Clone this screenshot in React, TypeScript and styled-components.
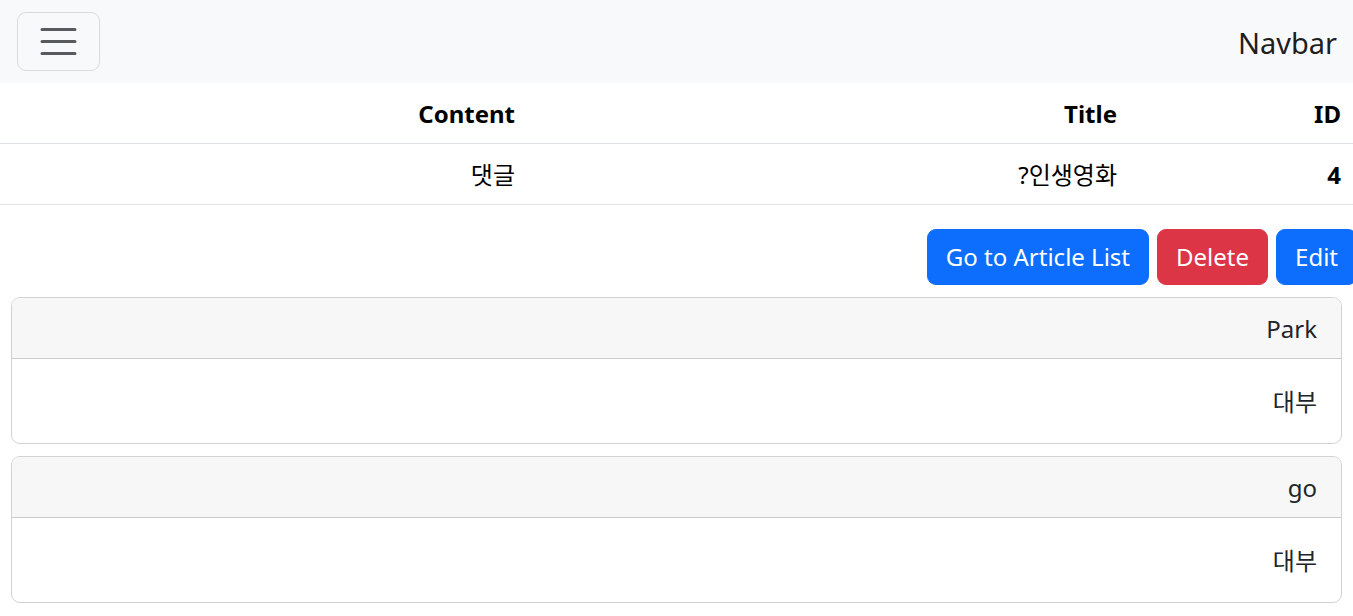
import React from "react";
import styled, { createGlobalStyle } from "styled-components";

const GlobalStyle = createGlobalStyle`
  html, body {
    margin: 0;
    padding: 0;
    background: #fff;
    overflow-x: hidden;
  }
  body {
    font-family: "Noto Sans", "Noto Sans CJK KR", sans-serif;
    font-size: 24px;
    line-height: 1.5;
    color: #212529;
  }
  * { box-sizing: border-box; }
`;

const Page = styled.div`
  direction: rtl;
`;

const NavBar = styled.nav`
  display: flex;
  align-items: center;
  justify-content: space-between;
  height: 83px;
  padding: 0 16px 0 17px;
  background: #f8f9fa;
`;

const Brand = styled.span`
  font-size: 29px;
  line-height: 45px;
  padding-top: 2px;
  color: rgba(0, 0, 0, 0.9);
`;

const Toggler = styled.button`
  display: flex;
  align-items: center;
  justify-content: center;
  width: 83px;
  height: 59px;
  padding: 0;
  background: transparent;
  border: 1px solid rgba(0, 0, 0, 0.12);
  border-radius: 9px;
`;

const Table = styled.table`
  width: 100%;
  border-collapse: collapse;
  color: #000;
`;

const HeadCell = styled.th`
  text-align: right;
  font-weight: 700;
  padding: 13px 12px 11px;
  line-height: 36px;
  border-bottom: 1px solid #dee2e6;
`;

const Cell = styled.td<{ $bold?: boolean }>`
  text-align: right;
  font-weight: ${(p) => (p.$bold ? 700 : 400)};
  padding: 13px 12px 11px;
  line-height: 36px;
  border-bottom: 1px solid #dee2e6;
`;

const ButtonRow = styled.div`
  display: flex;
  gap: 8px;
  margin: 24px -4px 12px 0;
`;

const Button = styled.button<{ $variant: "primary" | "danger" }>`
  font-family: inherit;
  font-size: 24px;
  line-height: 36px;
  padding: 9px 18px;
  color: #fff;
  border: 1px solid ${(p) => (p.$variant === "danger" ? "#dc3545" : "#0d6efd")};
  background: ${(p) => (p.$variant === "danger" ? "#dc3545" : "#0d6efd")};
  border-radius: 9px;
  white-space: nowrap;
`;

const CardList = styled.div`
  display: flex;
  flex-direction: column;
  gap: 12px;
  margin: 0 11px;
`;

const Card = styled.div`
  border: 1px solid rgba(0, 0, 0, 0.175);
  border-radius: 9px;
  overflow: hidden;
`;

const CardHeader = styled.div`
  padding: 13px 24px 11px;
  line-height: 36px;
  background: #f7f7f7;
  border-bottom: 1px solid rgba(0, 0, 0, 0.175);
`;

const CardBody = styled.div`
  padding: 25px 24px 23px;
  line-height: 36px;
`;

const MenuIcon = () => (
  <svg width="45" height="45" viewBox="0 0 30 30">
    <path
      d="M4 7h22M4 15h22M4 23h22"
      stroke="rgba(33,37,41,0.75)"
      strokeWidth="2"
      strokeLinecap="round"
      strokeMiterlimit="10"
    />
  </svg>
);

const comments = [
  { author: "Park", body: "대부" },
  { author: "go", body: "대부" },
];

export default function App() {
  return (
    <Page>
      <GlobalStyle />
      <NavBar>
        <Brand>Navbar</Brand>
        <Toggler aria-label="menu">
          <MenuIcon />
        </Toggler>
      </NavBar>
      <Table>
        <colgroup>
          <col style={{ width: 224 }} />
          <col style={{ width: 602 }} />
          <col />
        </colgroup>
        <thead>
          <tr>
            <HeadCell>ID</HeadCell>
            <HeadCell>Title</HeadCell>
            <HeadCell>Content</HeadCell>
          </tr>
        </thead>
        <tbody>
          <tr>
            <Cell $bold>4</Cell>
            <Cell>인생영화?</Cell>
            <Cell>댓글</Cell>
          </tr>
        </tbody>
      </Table>
      <ButtonRow>
        <Button $variant="primary">Edit</Button>
        <Button $variant="danger">Delete</Button>
        <Button $variant="primary">Go to Article List</Button>
      </ButtonRow>
      <CardList>
        {comments.map((c, i) => (
          <Card key={i}>
            <CardHeader>{c.author}</CardHeader>
            <CardBody>{c.body}</CardBody>
          </Card>
        ))}
      </CardList>
    </Page>
  );
}
